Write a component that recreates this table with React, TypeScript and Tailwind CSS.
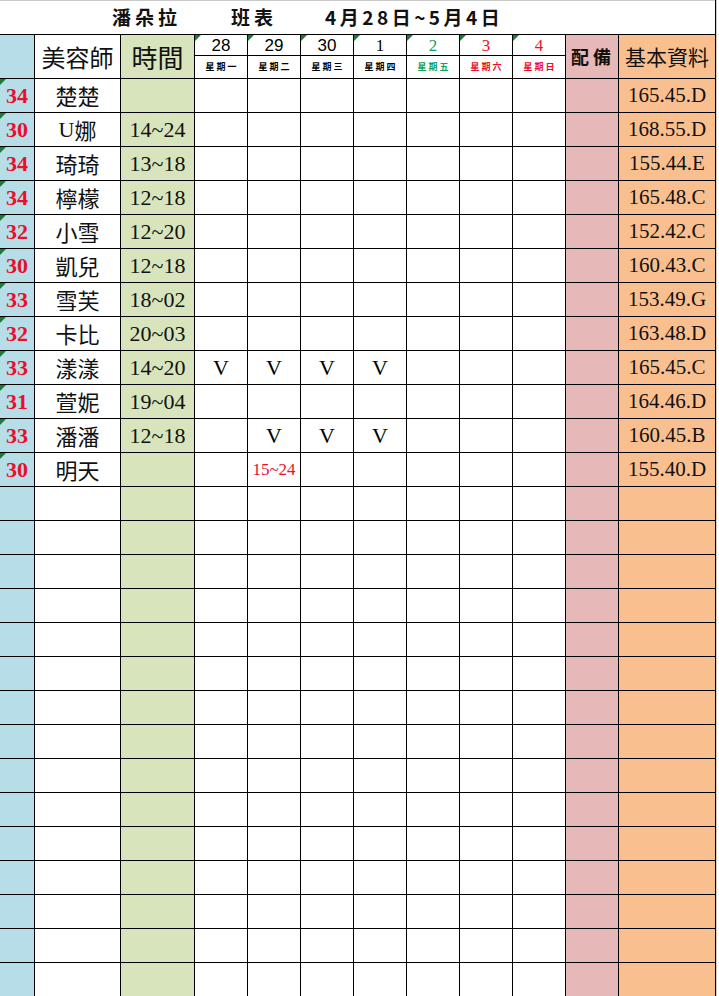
import React from "react";

const CJK = "font-['Noto_Sans_CJK_TC',sans-serif]";
const SERIF = "font-['Liberation_Serif','Noto_Sans_CJK_TC',serif]";

const days = [
    { num: "28", label: "星期一", color: "text-black", font: "font-['Liberation_Sans',sans-serif]" },
    { num: "29", label: "星期二", color: "text-black", font: "font-['Liberation_Sans',sans-serif]" },
    { num: "30", label: "星期三", color: "text-black", font: "font-['Liberation_Sans',sans-serif]" },
    { num: "1", label: "星期四", color: "text-black", font: SERIF },
    { num: "2", label: "星期五", color: "text-[#12a05a]", font: SERIF },
    { num: "3", label: "星期六", color: "text-[#e8102a]", font: SERIF },
    { num: "4", label: "星期日", color: "text-[#e8102a]", font: SERIF },
];

type Row = { no: string; name: string; time: string; marks: string[]; info: string };

const staff: Row[] = [
    { no: "34", name: "楚楚", time: "", marks: [], info: "165.45.D" },
    { no: "30", name: "U娜", time: "14~24", marks: [], info: "168.55.D" },
    { no: "34", name: "琦琦", time: "13~18", marks: [], info: "155.44.E" },
    { no: "34", name: "檸檬", time: "12~18", marks: [], info: "165.48.C" },
    { no: "32", name: "小雪", time: "12~20", marks: [], info: "152.42.C" },
    { no: "30", name: "凱兒", time: "12~18", marks: [], info: "160.43.C" },
    { no: "33", name: "雪芙", time: "18~02", marks: [], info: "153.49.G" },
    { no: "32", name: "卡比", time: "20~03", marks: [], info: "163.48.D" },
    { no: "33", name: "漾漾", time: "14~20", marks: ["V", "V", "V", "V"], info: "165.45.C" },
    { no: "31", name: "萱妮", time: "19~04", marks: [], info: "164.46.D" },
    { no: "33", name: "潘潘", time: "12~18", marks: ["", "V", "V", "V"], info: "160.45.B" },
    { no: "30", name: "明天", time: "", marks: ["", "15~24"], info: "155.40.D" },
];

const emptyRows = Array.from({ length: 15 }, (_, i) => i);

function Flag() {
    return (
        <span className="absolute left-0 top-0 w-0 h-0 border-t-[6px] border-r-[6px] border-t-[#1f7a36] border-r-transparent" />
    );
}

function Mark({ value }: { value: string }) {
    if (value === "V") {
        return <span className={`${SERIF} text-[22px] text-black`}>V</span>;
    }
    if (value) {
        return <span className={`${SERIF} text-[17px] text-[#e8102a]`}>{value}</span>;
    }
    return null;
}

export default function App() {
    return (
        <div className="w-[719px] h-[996px] bg-white overflow-hidden flex">
            <div className="w-[716px] grid grid-cols-[34px_85px_73px_52px_52px_52px_52px_52px_52px_52px_52px_96px] grid-rows-[34px_43px_repeat(27,33px)] gap-px bg-black pb-px">
                {/* Title */}
                <div className={`col-span-12 bg-white border-t border-[#c8c8c8] flex items-center ${CJK} font-bold text-[19px] text-[#111] tracking-[4px]`}>
                    <span className="ml-[112px]">潘朵拉</span>
                    <span className="ml-[50px]">班表</span>
                    <span className="ml-[48px] tracking-[3.5px]">4月28日~5月4日</span>
                </div>

                {/* Header */}
                <div className="bg-[#b7dee8]" />
                <div className={`bg-white flex items-center justify-center ${CJK} text-[24px] text-[#111]`}>美容師</div>
                <div className={`bg-[#d8e4bc] flex items-center justify-center ${CJK} text-[26px] text-[#111]`}>時間</div>
                {days.map((d) => (
                    <div key={d.num} className="relative bg-white flex flex-col">
                        <Flag />
                        <div className={`h-[20px] flex items-center justify-center text-[17px] leading-none ${d.font} ${d.color}`}>{d.num}</div>
                        <div className="h-px bg-black" />
                        <div className={`flex-1 flex items-center justify-center ${CJK} font-bold text-[9px] tracking-[2px] pl-[2px] ${d.color}`}>{d.label}</div>
                    </div>
                ))}
                <div className={`bg-[#e6b8b7] flex items-center justify-center ${CJK} font-bold text-[18px] text-[#111] tracking-[4px] pl-[2px]`}>配備</div>
                <div className={`bg-[#fabf8f] flex items-center justify-center ${CJK} text-[21px] text-[#111]`}>基本資料</div>

                {/* Staff rows */}
                {staff.map((r, i) => (
                    <React.Fragment key={i}>
                        <div className={`relative bg-[#b7dee8] flex items-center justify-center ${SERIF} font-bold text-[22px] text-[#e8102a]`}>
                            <Flag />
                            {r.no}
                        </div>
                        <div className={`bg-white flex items-center justify-center ${CJK} text-[22px] text-[#111]`}>
                            {r.name.startsWith("U") && <span className={SERIF}>U</span>}
                            {r.name.startsWith("U") ? r.name.slice(1) : r.name}
                        </div>
                        <div className={`bg-[#d8e4bc] flex items-center justify-center ${SERIF} text-[22px] text-[#111]`}>{r.time}</div>
                        {days.map((d, j) => (
                            <div key={d.num} className="bg-white flex items-center justify-center">
                                <Mark value={r.marks[j] ?? ""} />
                            </div>
                        ))}
                        <div className="bg-[#e6b8b7]" />
                        <div className={`bg-[#fabf8f] flex items-center justify-center ${SERIF} text-[21px] text-[#111]`}>{r.info}</div>
                    </React.Fragment>
                ))}

                {/* Empty rows */}
                {emptyRows.map((i) => (
                    <React.Fragment key={`e${i}`}>
                        <div className="bg-[#b7dee8]" />
                        <div className="bg-white" />
                        <div className="bg-[#d8e4bc]" />
                        {days.map((d) => (
                            <div key={d.num} className="bg-white" />
                        ))}
                        <div className="bg-[#e6b8b7]" />
                        <div className="bg-[#fabf8f]" />
                    </React.Fragment>
                ))}
            </div>
            <div className="flex-1 bg-white border-l border-[#d0d0d0]" />
        </div>
    );
}
